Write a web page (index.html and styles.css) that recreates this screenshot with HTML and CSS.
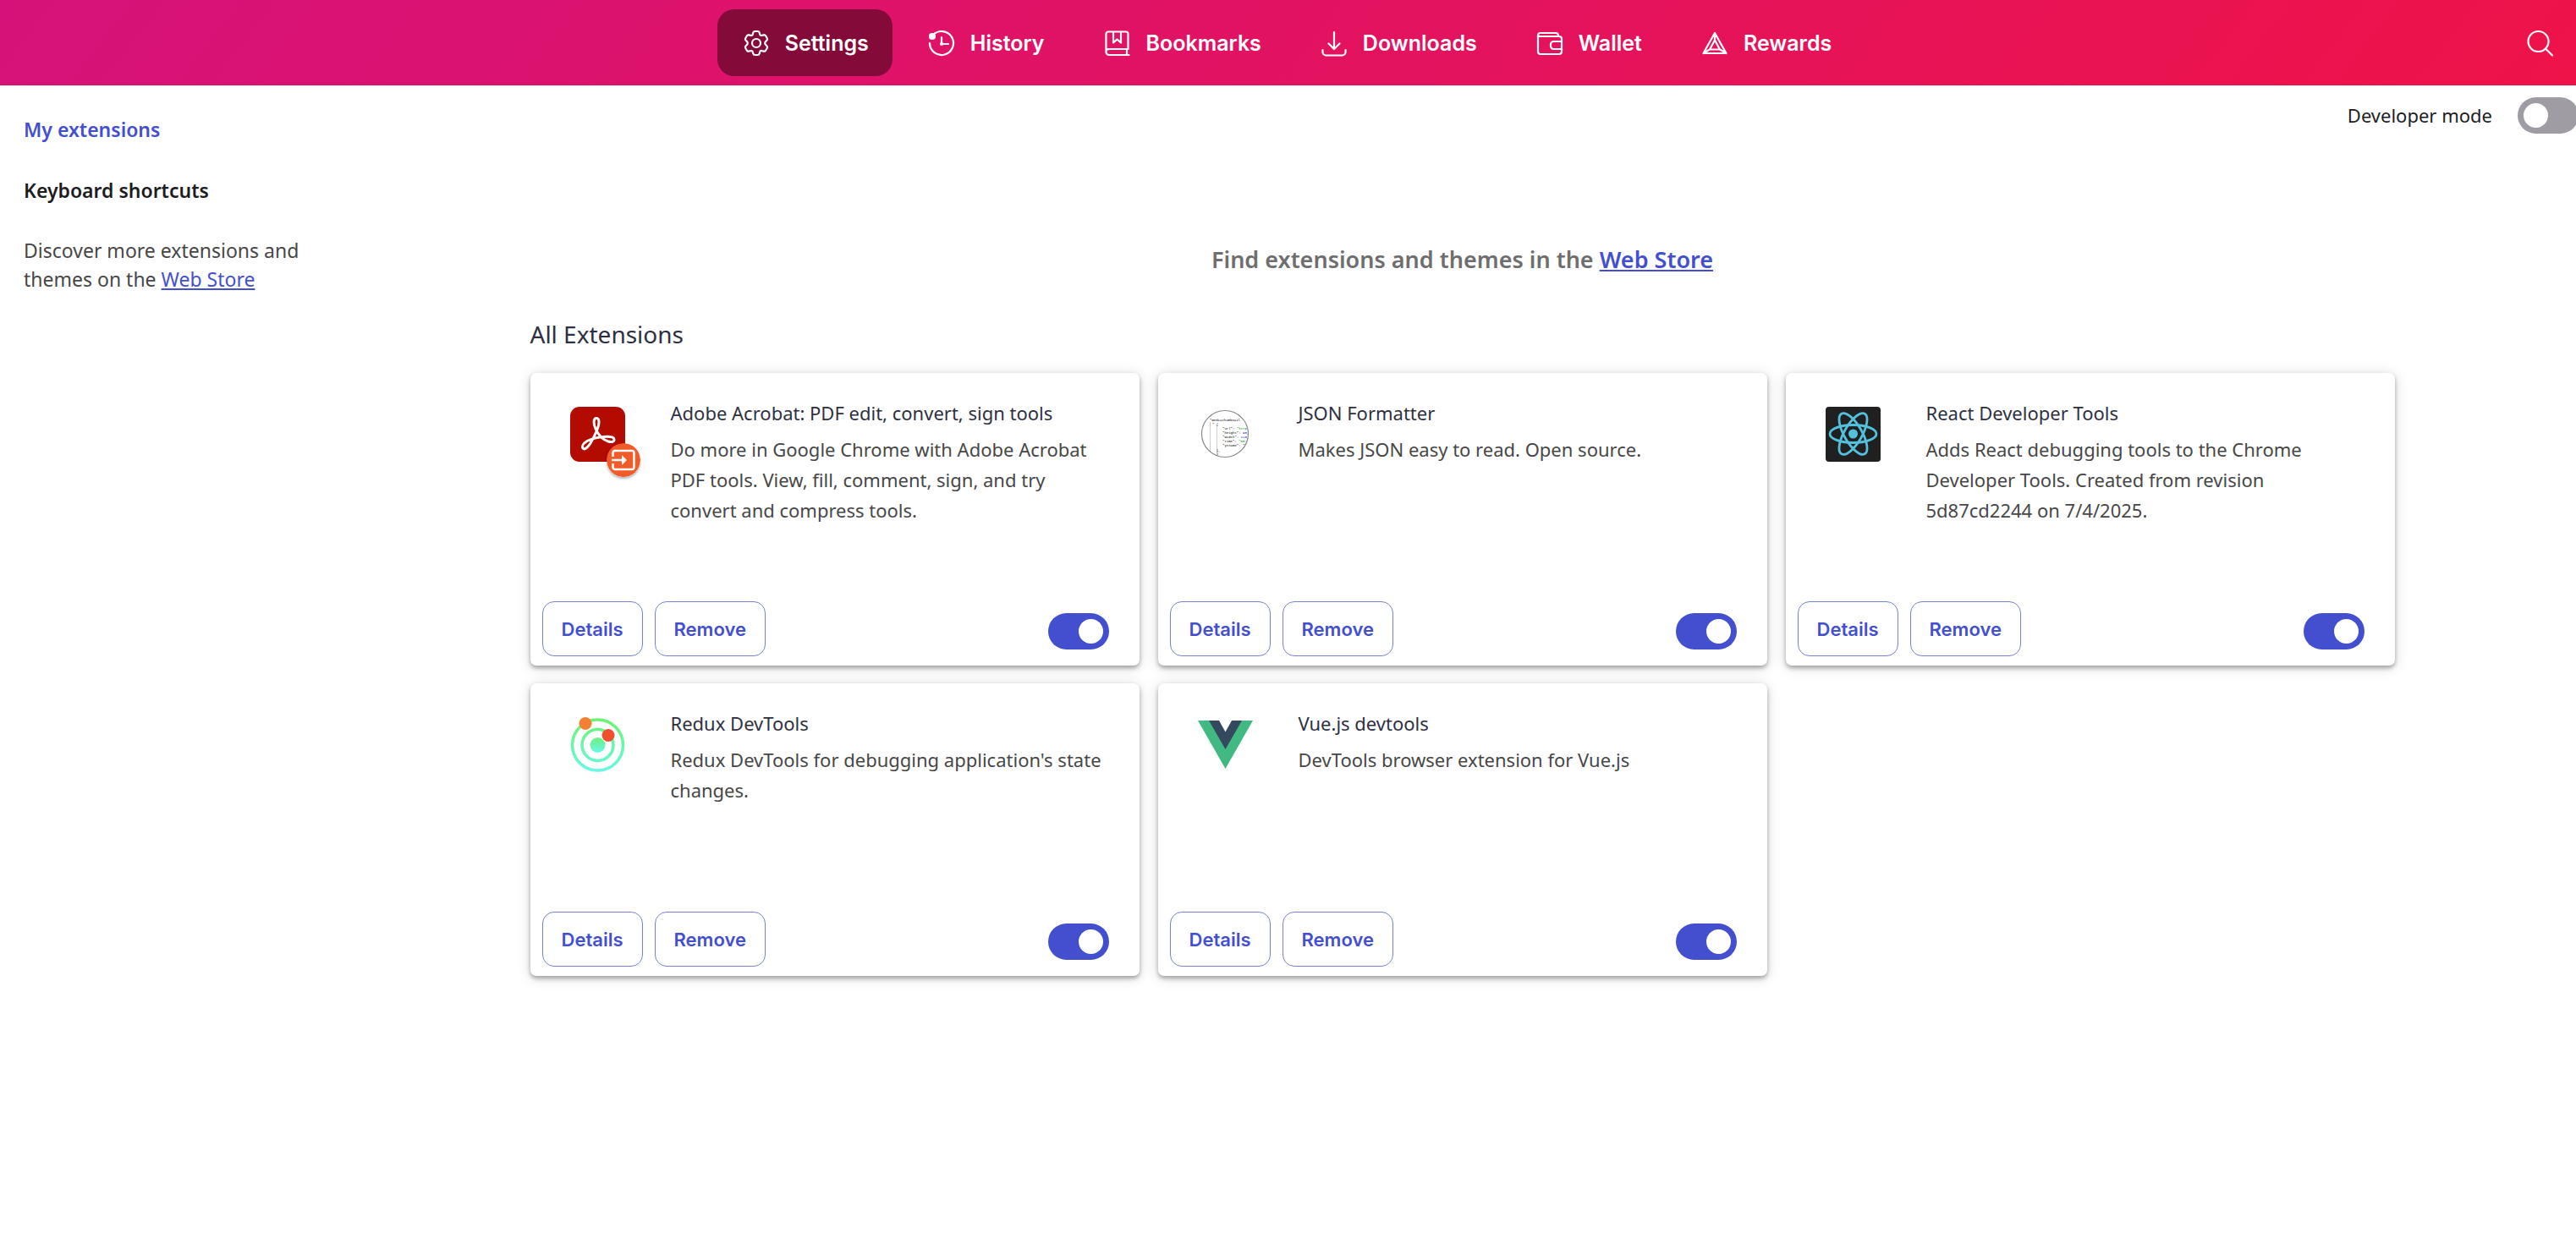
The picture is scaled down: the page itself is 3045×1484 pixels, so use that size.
FILE: index.html
```html
<!DOCTYPE html>
<html lang="en">
<head>
<meta charset="utf-8">
<meta name="viewport" content="width=device-width, initial-scale=1">
<title>Extensions</title>
<link rel="stylesheet" href="styles.css">
</head>
<body>
<header class="topbar">
  <nav class="tabs" aria-label="Browser pages">
    <a class="tab tab-active" href="#settings" aria-current="page">
      <svg class="icon" viewBox="0 0 36 36" aria-hidden="true"><path d="M14.3 5.6c.4-1.2 1-1.6 2-1.6h3.4c1 0 1.6.4 2 1.600l.5 2c.3 1 1.500 1.600 2.500 1.300l2-.5c1.100-.3 1.900 0 2.400.9l1.700 2.900c.5.900.4 1.700-.400 2.500l-1.500 1.500c-.8.800-.8 2.800 0 3.600l1.500 1.500c.8.800.9 1.600.4 2.500l-1.700 2.900c-.5.900-1.300 1.200-2.400.9l-2-.5c-1-.3-2.200.3-2.500 1.300l-.5 2c-.4 1.200-1 1.600-2 1.600h-3.400c-1 0-1.600-.4-2-1.600l-.5-2c-.3-1-1.500-1.600-2.500-1.300l-2 .5c-1.100.3-1.900 0-2.400-.9l-1.700-2.900c-.5-.9-.4-1.700.4-2.500l1.500-1.500c.8-.8.8-2.800 0-3.600l-1.500-1.500c-.8-.8-.9-1.600-.4-2.500l1.700-2.900c.5-.9 1.300-1.200 2.400-.9l2 .5c1 .3 2.200-.3 2.500-1.300z"/><circle cx="18" cy="18" r="5"/></svg>
      Settings
    </a>
    <a class="tab" href="#history">
      <svg class="icon" viewBox="0 0 36 36" aria-hidden="true"><path d="M4 18a14 14 0 1 0 4-9.800M18 11v8h8"/><circle class="fill" cx="7" cy="10" r="3"/><circle class="fill" cx="18" cy="19" r="1"/></svg>
      History
    </a>
    <a class="tab" href="#bookmarks">
      <svg class="icon" viewBox="0 0 36 36" aria-hidden="true"><path d="M31.500 32H8a3.500 3.500 0 0 1-3.500-3.500V7A2.500 2.500 0 0 1 7 4.500h21A2.500 2.500 0 0 1 30.500 7v18H8a3.500 3.500 0 0 0 0 7M29 25v7M13 5v12.500l4.500-4 4.500 4V5"/></svg>
      Bookmarks
    </a>
    <a class="tab" href="#downloads">
      <svg class="icon" viewBox="0 0 36 36" aria-hidden="true"><path d="M18 5v20M11.500 18.500 18 25l6.500-6.500M4.500 26v2.500a4 4 0 0 0 4 4h19a4 4 0 0 0 4-4V26"/></svg>
      Downloads
    </a>
    <a class="tab" href="#wallet">
      <svg class="icon" viewBox="0 0 36 36" aria-hidden="true"><path d="M4 8.500A2.500 2.500 0 0 1 6.500 6H25a3 3 0 0 1 3 3.500M4 8.500A2 2 0 0 0 6 10h23a3 3 0 0 1 3 3v15a3 3 0 0 1-3 3H7a3 3 0 0 1-3-3zM32 16H22.500a3.500 3.500 0 0 0-3.500 3.500v2a3.500 3.500 0 0 0 3.500 3.500H32"/></svg>
      Wallet
    </a>
    <a class="tab" href="#rewards">
      <svg class="icon" viewBox="0 0 36 36" aria-hidden="true"><path d="M18 6 4.500 30h27zM18 14.500 12 25.500h12zM18 6v9M4.500 30l7.500-4.500M31.500 30 24 25.500"/></svg>
      Rewards
    </a>
  </nav>
  <button class="search" type="button" aria-label="Search">
    <svg class="icon" viewBox="0 0 36 36" aria-hidden="true"><circle cx="15.500" cy="16" r="12"/><path d="m24 24.500 8 8"/></svg>
  </button>
</header>

<div class="page">
  <aside class="sidebar">
    <a class="side-link side-link-active" href="#extensions">My extensions</a>
    <a class="side-link" href="#shortcuts">Keyboard shortcuts</a>
    <p class="discover">Discover more extensions and themes on the <a class="store" href="#store">Web Store</a></p>
  </aside>

  <main class="main">
    <div class="toolbar">
      <label for="dev-mode">Developer mode</label>
      <input class="switch" id="dev-mode" type="checkbox" role="switch">
    </div>
    <p class="promo">Find extensions and themes in the <a class="store" href="#store">Web Store</a></p>
    <section class="extensions">
      <h1 class="heading">All Extensions</h1>
      <div class="cards">

        <article class="card">
          <div class="card-body">
            <div class="logo">
              <svg class="logo-art" viewBox="0 0 65 65" aria-hidden="true"><rect width="65" height="65" rx="11" fill="#b30b00"/><path d="M31 13.500c-4 0-3.500 7-1 12.500 3 7 9 13 15 15 5 1.500 7.500-.5 7-2.500-.5-3-6-3.500-12-3-8 .5-16 3-20 5-4 2.500-6.500 6-5 8.500 2 2.500 6-1 9-6 4-7 8-15 9.500-21 1-5 .5-8.500-2.500-8.500z" fill="none" stroke="#fff" stroke-width="3"/></svg>
              <svg class="badge" viewBox="0 0 40 40" aria-hidden="true"><circle cx="20" cy="20" r="20" fill="#f15a29"/><path d="M7.500 16v-4.500A2.500 2.500 0 0 1 10 9h20a2.500 2.500 0 0 1 2.500 2.500v17A2.500 2.500 0 0 1 30 31H10a2.500 2.500 0 0 1-2.500-2.500V24" fill="none" stroke="#fff" stroke-width="2.500"/><path d="M6 18.700h12V14l6 6-6 6v-4.700H6z" fill="#fff"/></svg>
            </div>
            <div class="info">
              <h2 class="name">Adobe Acrobat: PDF edit, convert, sign tools</h2>
              <p class="desc">Do more in Google Chrome with Adobe Acrobat PDF tools. View, fill, comment, sign, and try convert and compress tools.</p>
            </div>
          </div>
          <div class="actions">
            <button class="btn" type="button">Details</button>
            <button class="btn" type="button">Remove</button>
            <input class="switch" type="checkbox" role="switch" aria-label="Adobe Acrobat" checked>
          </div>
        </article>

        <article class="card">
          <div class="card-body">
            <div class="logo">
              <svg class="logo-art" viewBox="0 0 65 65" aria-hidden="true"><defs><clipPath id="disc"><circle cx="32" cy="32" r="27.500"/></clipPath></defs><g clip-path="url(#disc)" class="code"><path d="M14.500 18v46M22.500 22v42" stroke="#ccc" stroke-width="1"/><text x="14" y="17">"mediathumbnail</text><text x="17" y="22">" {</text><text x="29" y="27">"url": <tspan fill="#080">"http</tspan></text><text x="29" y="32">"height": <tspan fill="#00c">90,</tspan></text><text x="29" y="37">"width": <tspan fill="#00c">120,</tspan></text><text x="29" y="42">"time": <tspan fill="#080">"00:</tspan></text><text x="29" y="47">"ytname": "</text><text x="22" y="53">},</text><text x="22" y="58">{</text></g><circle cx="32" cy="32" r="27.500" fill="none" stroke="#888" stroke-width="1.200"/></svg>
            </div>
            <div class="info">
              <h2 class="name">JSON Formatter</h2>
              <p class="desc">Makes JSON easy to read. Open source.</p>
            </div>
          </div>
          <div class="actions">
            <button class="btn" type="button">Details</button>
            <button class="btn" type="button">Remove</button>
            <input class="switch" type="checkbox" role="switch" aria-label="JSON Formatter" checked>
          </div>
        </article>

        <article class="card">
          <div class="card-body">
            <div class="logo">
              <svg class="logo-art" viewBox="0 0 65 65" aria-hidden="true"><rect width="65" height="65" rx="4" fill="#202020"/><g fill="none" stroke="#53c1de" stroke-width="2.800"><ellipse cx="32.500" cy="32" rx="27.500" ry="10.500"/><ellipse cx="32.500" cy="32" rx="27.500" ry="10.500" transform="rotate(60 32.500 32)"/><ellipse cx="32.500" cy="32" rx="27.500" ry="10.500" transform="rotate(120 32.500 32)"/></g><circle cx="32.500" cy="32" r="5.500" fill="#53c1de"/></svg>
            </div>
            <div class="info">
              <h2 class="name">React Developer Tools</h2>
              <p class="desc">Adds React debugging tools to the Chrome Developer Tools. Created from revision 5d87cd2244 on 7/4/2025.</p>
            </div>
          </div>
          <div class="actions">
            <button class="btn" type="button">Details</button>
            <button class="btn" type="button">Remove</button>
            <input class="switch" type="checkbox" role="switch" aria-label="React Developer Tools" checked>
          </div>
        </article>

        <article class="card">
          <div class="card-body">
            <div class="logo">
              <svg class="logo-art" viewBox="0 0 65 65" aria-hidden="true"><defs><linearGradient id="orbit" gradientUnits="userSpaceOnUse" x1="0" y1="0" x2="0" y2="65"><stop offset="0" stop-color="#6af46a"/><stop offset="1" stop-color="#68f8e8"/></linearGradient><linearGradient id="core" x1="0" y1="0" x2="0" y2="1"><stop offset="0" stop-color="#6cf07a"/><stop offset="1" stop-color="#68f8e8"/></linearGradient></defs><g fill="none" stroke="url(#orbit)" stroke-width="3.500"><circle cx="32.500" cy="33" r="30"/><circle cx="32.500" cy="33" r="18.500"/></g><circle cx="32.500" cy="33" r="9" fill="url(#core)"/><circle cx="18" cy="7.500" r="7.500" fill="#f28133"/><circle cx="45" cy="21.500" r="7.500" fill="#ee5030"/></svg>
            </div>
            <div class="info">
              <h2 class="name">Redux DevTools</h2>
              <p class="desc">Redux DevTools for debugging application's state changes.</p>
            </div>
          </div>
          <div class="actions">
            <button class="btn" type="button">Details</button>
            <button class="btn" type="button">Remove</button>
            <input class="switch" type="checkbox" role="switch" aria-label="Redux DevTools" checked>
          </div>
        </article>

        <article class="card">
          <div class="card-body">
            <div class="logo">
              <svg class="logo-art" viewBox="0 0 65 65" aria-hidden="true"><path d="M0 4h65L32.500 61z" fill="#42b883"/><path d="M13 4h39L32.500 38z" fill="#35495e"/><path d="M25 4h15l-7.500 13.500z" fill="#fff"/></svg>
            </div>
            <div class="info">
              <h2 class="name">Vue.js devtools</h2>
              <p class="desc">DevTools browser extension for Vue.js</p>
            </div>
          </div>
          <div class="actions">
            <button class="btn" type="button">Details</button>
            <button class="btn" type="button">Remove</button>
            <input class="switch" type="checkbox" role="switch" aria-label="Vue.js devtools" checked>
          </div>
        </article>

      </div>
    </section>
  </main>
</div>
</body>
</html>
```
FILE: styles.css
```css
:root {
  --accent: #434fcf;
  --ui: Inter, "Liberation Sans", sans-serif;
  --text: "Noto Sans", "Open Sans", sans-serif;
}

* {
  box-sizing: border-box;
}

body {
  min-height: 100vh;
  margin: 0;
  background: #fff;
  color: #1d1d1f;
  font: 22px/36px var(--text);
  overflow-x: hidden;
}

/* Top navigation */
.topbar {
  display: grid;
  grid-template-columns: 1fr auto 1fr;
  align-items: center;
  padding: 11px 24px 11px 20px;
  background: linear-gradient(128deg, #d6127a 0%, #ee1349 100%);
}

.tabs {
  grid-column: 2;
  display: flex;
  gap: 12px;
}

.tab {
  display: flex;
  align-items: center;
  gap: 16px;
  height: 79px;
  padding: 0 28px;
  border-radius: 20px;
  color: #fff;
  font: 600 25px/36px var(--ui);
  text-decoration: none;
}

.tab-active {
  background: #840a3a;
}

.icon {
  width: 36px;
  height: 36px;
  flex: none;
  fill: none;
  stroke: #fff;
  stroke-width: 2.2;
  stroke-linecap: round;
  stroke-linejoin: round;
}

.icon .fill {
  fill: #fff;
}

.search {
  display: flex;
  justify-self: end;
  padding: 0;
  border: 0;
  background: none;
}

/* Page columns */
.page {
  display: grid;
  grid-template-columns: 412px 1fr;
}

.sidebar {
  display: flex;
  flex-direction: column;
  gap: 36px;
  padding: 34px 28px;
}

.side-link {
  color: #1d1d1f;
  font-size: 23px;
  font-weight: 600;
  text-decoration: none;
}

.side-link-active,
.store {
  color: var(--accent);
}

.discover {
  width: 350px;
  margin: 0;
  color: #474747;
  font-size: 23px;
  line-height: 34px;
}

.toolbar {
  display: flex;
  justify-content: flex-end;
  align-items: center;
  gap: 30px;
  height: 70px;
  margin-right: -3px;
}

.promo {
  margin: 118px 0 0;
  color: #6e6e6e;
  font-size: 27px;
  font-weight: 600;
  text-align: center;
}

.extensions {
  width: max-content;
  max-width: 100%;
  margin: 0 auto;
  padding-bottom: 40px;
}

.heading {
  margin: 52px 0 28px;
  color: #2e3042;
  font-size: 28px;
  font-weight: 400;
}

.cards {
  display: grid;
  grid-template-columns: repeat(3, 720px);
  gap: 21px 22px;
}

/* Extension card */
.card {
  display: flex;
  flex-direction: column;
  min-height: 346px;
  border-radius: 7px;
  background: #fff;
  box-shadow: 0 3px 5px rgba(0, 0, 0, 0.3), 0 2px 16px rgba(0, 0, 0, 0.16);
}

.card-body {
  display: flex;
  flex: 1;
  gap: 54px;
  padding: 29px 36px 0 47px;
}

.logo {
  position: relative;
  flex: none;
  width: 65px;
  height: 65px;
  margin-top: 11px;
}

.logo-art {
  display: block;
  width: 65px;
  height: 65px;
}

.badge {
  position: absolute;
  right: -18px;
  bottom: -18px;
  width: 40px;
  height: 40px;
  border-radius: 50%;
  box-shadow: 0 2px 3px rgba(0, 0, 0, 0.3);
}

.code {
  font: 4px "Liberation Mono", monospace;
}

.name {
  margin: 0 0 7px;
  color: #2e3042;
  font-size: 22px;
  font-weight: 400;
}

.desc {
  margin: 0;
  color: #474747;
}

.actions {
  display: flex;
  align-items: flex-end;
  gap: 14px;
  padding: 0 36px 11px 14px;
}

.btn {
  height: 65px;
  padding: 0 22px;
  border: 1px solid #7880dc;
  border-radius: 14px;
  background: #fff;
  color: var(--accent);
  font: 600 22px/36px var(--ui);
}

/* Toggle */
.switch {
  appearance: none;
  display: flex;
  align-items: center;
  flex: none;
  width: 72px;
  height: 43px;
  margin: 0;
  padding: 0 7px;
  border-radius: 22px;
  background: #9f9da3;
}

.switch::before {
  content: "";
  width: 29px;
  height: 29px;
  border-radius: 50%;
  background: #fff;
}

.switch:checked {
  justify-content: flex-end;
  background: var(--accent);
}

.actions .switch {
  margin: 0 0 8px auto;
}
```
